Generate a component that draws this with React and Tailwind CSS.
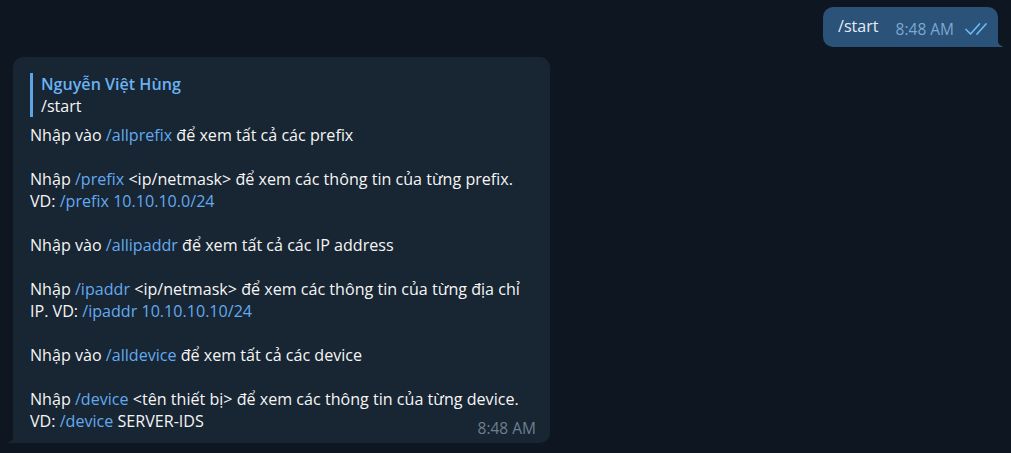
import React from 'react';

const Link = ({ children }) => <span className="text-[#62aaf0]">{children}</span>;

const lines = [
  <>Nhập vào <Link>/allprefix</Link> để xem tất cả các prefix</>,
  null,
  <>Nhập <Link>/prefix</Link> &lt;ip/netmask&gt; để xem các thông tin của từng prefix.</>,
  <>VD: <Link>/prefix 10.10.10.0/24</Link></>,
  null,
  <>Nhập vào <Link>/allipaddr</Link> để xem tất cả các IP address</>,
  null,
  <>Nhập <Link>/ipaddr</Link> &lt;ip/netmask&gt; để xem các thông tin của từng địa chỉ</>,
  <>IP. VD: <Link>/ipaddr 10.10.10.10/24</Link></>,
  null,
  <>Nhập vào <Link>/alldevice</Link> để xem tất cả các device</>,
  null,
  <>Nhập <Link>/device</Link> &lt;tên thiết bị&gt; để xem các thông tin của từng device.</>,
  <>VD: <Link>/device</Link> SERVER-IDS</>,
];

const Checks = () => (
  <svg width="23" height="12" viewBox="0 0 23 12" fill="none" stroke="#6cb8f5" strokeWidth="1.7" strokeLinecap="round" strokeLinejoin="round">
    <path d="M1 6.5l4.5 4.5 9-10" />
    <path d="M12 11l9-10" />
  </svg>
);

export default function App() {
  return (
    <div className="w-full h-[453px] bg-[#0e1621] overflow-hidden font-['Open_Sans',sans-serif] text-[16.1px] leading-[22px] text-[#f5f5f5]">
      <div className="flex justify-end pt-[7px] pr-[13px]">
        <div className="relative flex items-center h-[40px] w-[175px] bg-[#2b5278] rounded-[10px] rounded-br-none pl-[15px]">
          <span className="text-[#e4edf5] -mt-[3px]">/start</span>
          <span className="ml-[17px] mt-[4px] text-[15.5px] text-[#7da8d3]">8:48 AM</span>
          <span className="ml-[11px] mt-[4px]"><Checks /></span>
          <svg className="absolute -right-[6px] bottom-0" width="7" height="10" viewBox="0 0 7 10">
            <path d="M0 0 C0 6 3 9 7 10 L0 10 Z" fill="#2b5278" />
          </svg>
        </div>
      </div>

      <div className="pl-[13px] pt-[10px]">
        <div className="relative w-[537px] bg-[#182533] rounded-[10px] rounded-bl-none pl-[17px] pr-[14px] pt-[16px] pb-[11px]">
          <div className="border-l-[3px] border-[#5ea3e6] pl-[8px] mb-[7px]">
            <div className="font-semibold text-[#6ab2f2]">Nguyễn Việt Hùng</div>
            <div>/start</div>
          </div>
          {lines.map((l, i) => (
            <div key={i} className="h-[22px] whitespace-nowrap">{l}</div>
          ))}
          <span className="absolute right-[14px] bottom-[4px] text-[15.5px] text-[#6d7f8f]">8:48 AM</span>
          <svg className="absolute -left-[6px] bottom-0" width="7" height="10" viewBox="0 0 7 10">
            <path d="M7 0 C7 6 4 9 0 10 L7 10 Z" fill="#182533" />
          </svg>
        </div>
      </div>
    </div>
  );
}
